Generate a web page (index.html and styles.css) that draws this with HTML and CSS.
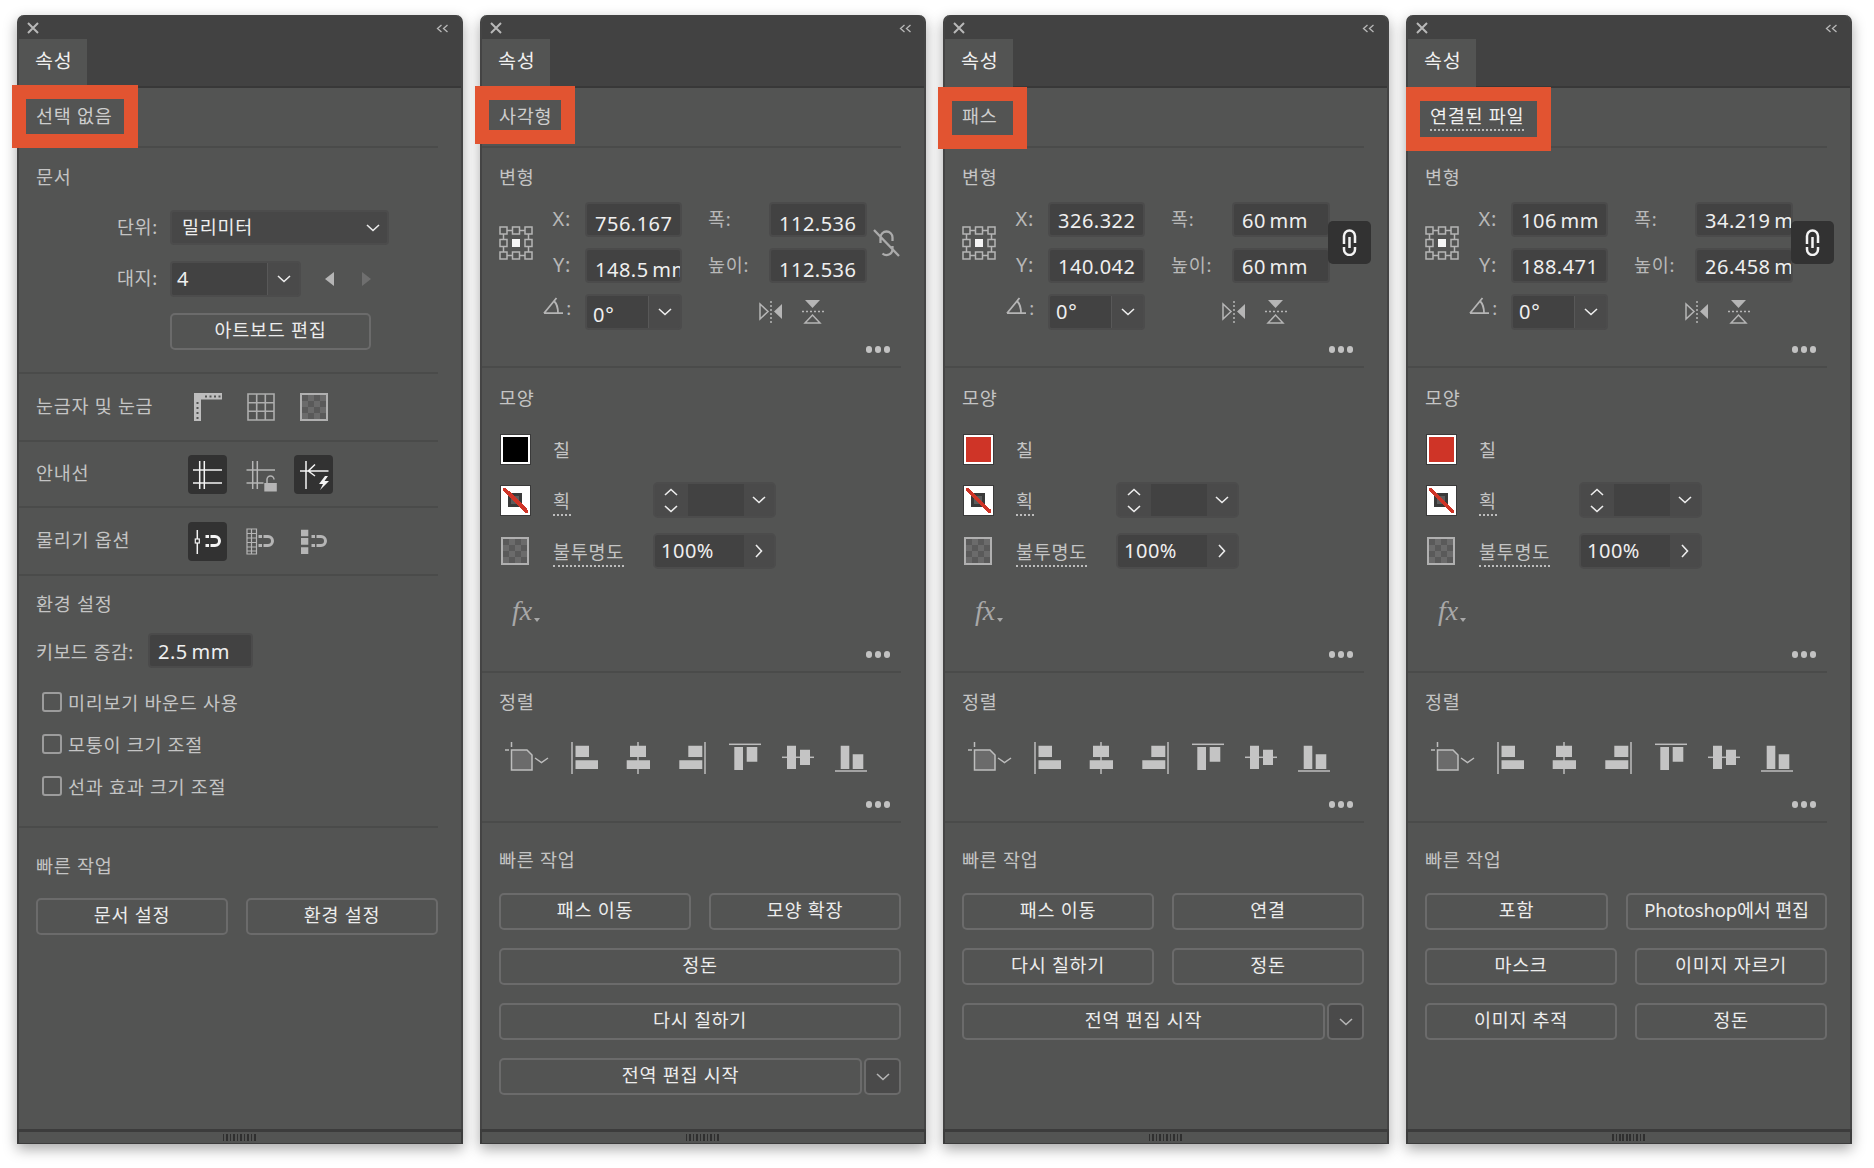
FILE: index.html
```html
<!DOCTYPE html>
<html lang="ko">
<head>
    <meta charset="UTF-8">
    <title>속성 패널</title>
    <link rel="stylesheet" href="styles.css">
</head>
<body>
    <!-- shared icons -->
    <svg class="defs" width="0" height="0">
        <symbol id="i-close" viewBox="0 0 12 12"><path d="M1 1l10 10M11 1L1 11" fill="none" stroke="currentColor" stroke-width="2"/></symbol>
        <symbol id="i-collapse" viewBox="0 0 13 9"><path d="M5.5 1L1.5 4.5l4 3.5M11.5 1l-4 3.5 4 3.5" fill="none" stroke="currentColor" stroke-width="1.3"/></symbol>
        <symbol id="i-chev" viewBox="0 0 14 8"><path d="M1 1l6 5.5L13 1" fill="none" stroke="currentColor" stroke-width="1.6"/></symbol>
        <symbol id="i-chev-up" viewBox="0 0 14 8"><path d="M1 7l6-5.5L13 7" fill="none" stroke="currentColor" stroke-width="1.6"/></symbol>
        <symbol id="i-chev-right" viewBox="0 0 8 14"><path d="M1 1l5.5 6L1 13" fill="none" stroke="currentColor" stroke-width="1.6"/></symbol>
        <symbol id="i-ruler" viewBox="0 0 28 28"><path d="M0 0h28v6.5H7V28H0z" fill="#bdbdbd"/><path d="M11 2.5h2v2h-2zM15.5 2.5h2v2h-2zM20 2.5h2v2h-2zM24.500 2.500h2v2h-2zM2.500 9h2v2h-2zM2.500 14h2v2h-2zM2.500 19h2v2h-2zM2.500 24h2v2h-2z" fill="#535453"/></symbol>
        <symbol id="i-grid" viewBox="0 0 28 28"><path d="M1 1h26v26H1zM9.700 1v26M18.300 1v26M1 9.700h26M1 18.300h26" fill="none" stroke="#adadad" stroke-width="1.600"/></symbol>
        <symbol id="i-checker" viewBox="0 0 28 28"><rect width="28" height="28" fill="#6b6b6b"/><path d="M2 2h6v6H2zM14 2h6v6h-6zM8 8h6v6H8zM20 8h6v6h-6zM2 14h6v6H2zM14 14h6v6h-6zM8 20h6v6H8zM20 20h6v6h-6z" fill="#5a5a5a"/><rect x="1" y="1" width="26" height="26" fill="none" stroke="#b0b0b0" stroke-width="2"/></symbol>
        <symbol id="i-guides" viewBox="0 0 39 39"><path d="M11.700 6v28M16.300 6v28M5 15h29M5 28h29" fill="none" stroke="currentColor" stroke-width="1.500"/></symbol>
        <symbol id="i-guides-lock" viewBox="0 0 39 39"><path d="M11.700 6v28M16.300 6v28M5.500 15h28.500M5.500 28h17" fill="none" stroke="currentColor" stroke-width="1.500"/><rect x="23.300" y="28" width="12.500" height="8.500" fill="currentColor"/><path d="M26 28v-3.500a3.500 3.500 0 0 1 7 0" fill="none" stroke="currentColor" stroke-width="1.500"/></symbol>
        <symbol id="i-guides-smart" viewBox="0 0 39 39"><path d="M12 6v28M6 16h28.500M21 9.500l-6.700 6.500 6.700 5" fill="none" stroke="currentColor" stroke-width="1.500"/><path d="M31 21l-6 8h4l-3 6 9-9h-4.500l3.500-5z" fill="currentColor"/></symbol>
        <symbol id="i-magnet" viewBox="0 0 39 39"><path d="M22.500 14.500H27a4.500 4.500 0 0 1 0 9h-4.500" fill="none" stroke="currentColor" stroke-width="3"/><path d="M17.500 13h3.500v3h-3.500zM17.500 22h3.500v3h-3.500z" fill="currentColor"/></symbol>
        <symbol id="i-snap-point" viewBox="0 0 39 39"><use href="#i-magnet"/><path d="M9.300 8v9M9.300 21v11" stroke="currentColor" stroke-width="1.500"/><rect x="7.300" y="17" width="4" height="4" fill="none" stroke="currentColor" stroke-width="1.200"/></symbol>
        <symbol id="i-snap-grid" viewBox="0 0 39 39"><use href="#i-magnet"/><path d="M6 7h9.500v25H6zM10.500 7v25M6 11.500h9.500M6 16h9.500M6 20.500h9.500M6 25h9.500M6 29h9.500" fill="none" stroke="currentColor" stroke-width="1.200"/></symbol>
        <symbol id="i-snap-pixel" viewBox="0 0 39 39"><use href="#i-magnet"/><path d="M7 7.700h7.300v6.600H7zM7 16h7.300v6.700H7zM7 25.300h7.300V32H7z" fill="currentColor"/></symbol>
        <symbol id="i-refpoint" viewBox="0 0 34 34"><g fill="none" stroke="#b5b5b5" stroke-width="1.500"><rect x="1" y="1" width="7" height="7"/><rect x="13.500" y="1" width="7" height="7"/><rect x="26" y="1" width="7" height="7"/><rect x="1" y="13.500" width="7" height="7"/><rect x="26" y="13.500" width="7" height="7"/><rect x="1" y="26" width="7" height="7"/><rect x="13.500" y="26" width="7" height="7"/><rect x="26" y="26" width="7" height="7"/><path d="M8 4.500h5.500M20.500 4.500H26M8 29.500h5.500M20.500 29.500H26M4.500 8v5.500M29.500 8v5.500M4.500 20.500V26M29.500 20.500V26"/></g><rect x="13" y="13" width="8" height="8" fill="#f4f4f4"/></symbol>
        <symbol id="i-link" viewBox="0 0 15 27"><path d="M2 15V7a5.500 5.500 0 0 1 11 0v7M7.500 8v11M13 18v2.500a5.500 5.500 0 0 1-11 0V18" fill="none" stroke="currentColor" stroke-width="2.500"/></symbol>
        <symbol id="i-unlink" viewBox="0 0 27 28"><path d="M7.500 14V8.500a6 6 0 0 1 12 0V12M19.500 17v3a6 6 0 0 1-10 4.500M1 1l25 26" fill="none" stroke="#ababab" stroke-width="2.300"/></symbol>
        <symbol id="i-angle" viewBox="0 0 21 19"><path d="M1 17.200h19M1 17.200L13.500 2M11 5c3 3 4 7 4 12" fill="none" stroke="#b5b5b5" stroke-width="1.800"/></symbol>
        <symbol id="i-flip-h" viewBox="0 0 24 22"><path d="M1 3v15l8-7.500z" fill="none" stroke="#b5b5b5" stroke-width="1.500"/><path d="M23 3v15l-8-7.500z" fill="#b5b5b5"/><path d="M12 0v22" stroke="#b5b5b5" stroke-width="1.500" stroke-dasharray="2 2"/></symbol>
        <symbol id="i-flip-v" viewBox="0 0 22 24"><path d="M3 0h15l-7.500 8z" fill="#b5b5b5"/><path d="M3 23h15l-7.500-8z" fill="none" stroke="#b5b5b5" stroke-width="1.500"/><path d="M0 11.500h22" stroke="#b5b5b5" stroke-width="1.500" stroke-dasharray="2 2"/></symbol>
        <symbol id="i-origin" viewBox="0 0 44 32"><path d="M0 8h4M6.500 0v5" stroke="#bdbdbd" stroke-width="1.500"/><path d="M6.500 8H22l5 5v15H6.500z" fill="#6b6b6b" stroke="#bdbdbd" stroke-width="1.500"/><path d="M30 16l6.500 4.500L43 16" fill="none" stroke="#bdbdbd" stroke-width="1.500"/></symbol>
        <symbol id="i-al-left" viewBox="0 0 32 32"><path d="M2 0v32" stroke="#bdbdbd" stroke-width="1.500"/><path d="M5.500 3.700H19V15H5.500zM5.500 18.300H28V27H5.500z" fill="#c4c4c4"/></symbol>
        <symbol id="i-al-center" viewBox="0 0 32 32"><path d="M15 0v32" stroke="#bdbdbd" stroke-width="1.500"/><path d="M7 3.700h16V15H7zM3.700 18.300H27V27H3.700z" fill="#c4c4c4"/></symbol>
        <symbol id="i-al-right" viewBox="0 0 32 32"><path d="M29 0v32" stroke="#bdbdbd" stroke-width="1.500"/><path d="M12.300 3.700h14V15h-14zM3.300 18.300h23V27h-23z" fill="#c4c4c4"/></symbol>
        <symbol id="i-al-top" viewBox="0 0 32 32"><path d="M0 2.300h32" stroke="#bdbdbd" stroke-width="1.500"/><path d="M5.300 5H14v23H5.300zM17.700 5h10.600v14.700H17.700z" fill="#c4c4c4"/></symbol>
        <symbol id="i-al-middle" viewBox="0 0 32 32"><path d="M0 15.300h32" stroke="#bdbdbd" stroke-width="1.500"/><path d="M5 3.700h9V27H5zM18 7.700h10V23H18z" fill="#c4c4c4"/></symbol>
        <symbol id="i-al-bottom" viewBox="0 0 32 32"><path d="M0 29h32" stroke="#bdbdbd" stroke-width="1.500"/><path d="M5.700 3.700h8.600V27H5.700zM17.700 12.300h10.600V27H17.700z" fill="#c4c4c4"/></symbol>
    </svg>

    <!-- nothing selected -->
    <div class="panel">
        <div class="titlebar"><svg class="close"><use href="#i-close"/></svg><svg class="collapse"><use href="#i-collapse"/></svg></div>
        <div class="tabbar"><div class="tab">속성</div></div>
        <div class="mark mark-none"></div>
        <div class="section sec-head"><span class="sel-label">선택 없음</span></div>

        <div class="section sec-doc">
            <h3>문서</h3>
            <div class="doc-grid">
                <span class="doc-label">단위:</span>
                <div class="select select-unit"><span class="val ko">밀리미터</span><svg class="chev"><use href="#i-chev"/></svg></div>
                <span class="doc-label">대지:</span>
                <div class="board-row">
                    <div class="combo combo-board"><span class="combo-val">4</span><span class="combo-btn"><svg class="chev"><use href="#i-chev"/></svg></span></div>
                    <span class="tri tri-left"></span>
                    <span class="tri tri-right"></span>
                </div>
                <span></span>
                <div class="btn btn-board">아트보드 편집</div>
            </div>
        </div>

        <div class="section sec-row sec-ruler">
            <span class="row-label">눈금자 및 눈금</span>
            <div class="tool-row">
                <span class="tool"><svg class="ico-28"><use href="#i-ruler"/></svg></span>
                <span class="tool"><svg class="ico-28"><use href="#i-grid"/></svg></span>
                <span class="tool"><svg class="ico-28"><use href="#i-checker"/></svg></span>
            </div>
        </div>
        <div class="section sec-row sec-guide">
            <span class="row-label">안내선</span>
            <div class="tool-row">
                <span class="tool on"><svg class="ico-39"><use href="#i-guides"/></svg></span>
                <span class="tool"><svg class="ico-39"><use href="#i-guides-lock"/></svg></span>
                <span class="tool on"><svg class="ico-39"><use href="#i-guides-smart"/></svg></span>
            </div>
        </div>
        <div class="section sec-row sec-snap">
            <span class="row-label">물리기 옵션</span>
            <div class="tool-row">
                <span class="tool on"><svg class="ico-39"><use href="#i-snap-point"/></svg></span>
                <span class="tool"><svg class="ico-39"><use href="#i-snap-grid"/></svg></span>
                <span class="tool"><svg class="ico-39"><use href="#i-snap-pixel"/></svg></span>
            </div>
        </div>

        <div class="section sec-prefs">
            <h3>환경 설정</h3>
            <div class="key-row"><span class="key-label">키보드 증감:</span><div class="field field-key">2.5 mm</div></div>
            <label class="check"><span class="box"></span>미리보기 바운드 사용</label>
            <label class="check"><span class="box"></span>모퉁이 크기 조절</label>
            <label class="check"><span class="box"></span>선과 효과 크기 조절</label>
        </div>

        <div class="section sec-quick sec-quick-doc">
            <h3>빠른 작업</h3>
            <div class="qa-row"><div class="btn">문서 설정</div><div class="btn">환경 설정</div></div>
        </div>
        <div class="footer"><span class="grip"></span></div>
    </div>

    <!-- rectangle -->
    <div class="panel">
        <div class="titlebar"><svg class="close"><use href="#i-close"/></svg><svg class="collapse"><use href="#i-collapse"/></svg></div>
        <div class="tabbar"><div class="tab">속성</div></div>
        <div class="mark mark-rect"></div>
        <div class="section sec-head"><span class="sel-label">사각형</span></div>

        <div class="section sec-xform">
            <h3>변형</h3>
            <div class="xform">
                <svg class="refpoint"><use href="#i-refpoint"/></svg>
                <span class="xf-label">X:</span>
                <div class="field low">756.167</div>
                <span class="xf-label xf-label-r">폭:</span>
                <div class="field low">112.536</div>
                <span class="link-cell"><svg class="ico-unlink"><use href="#i-unlink"/></svg></span>
                <span class="xf-label">Y:</span>
                <div class="field low">148.5 mm</div>
                <span class="xf-label xf-label-r">높이:</span>
                <div class="field low">112.536</div>
                <span class="xf-label xf-angle"><svg class="ico-angle"><use href="#i-angle"/></svg>:</span>
                <div class="combo"><span class="combo-val low">0°</span><span class="combo-btn"><svg class="chev"><use href="#i-chev"/></svg></span></div>
                <div class="flips"><svg class="ico-flip-h"><use href="#i-flip-h"/></svg><svg class="ico-flip-v"><use href="#i-flip-v"/></svg></div>
            </div>
            <div class="dots dots-xform"><i></i><i></i><i></i></div>
        </div>

        <div class="section sec-look">
            <h3>모양</h3>
            <div class="look-grid">
                <span class="swatch fill-black"></span><span class="look-label">칠</span><span></span>
                <span class="swatch stroke-none"></span><span class="look-label"><span class="dotted">획</span></span>
                <div class="stepper"><span class="step-btn"><svg class="chev"><use href="#i-chev-up"/></svg><svg class="chev"><use href="#i-chev"/></svg></span><span class="step-val"></span><span class="combo-btn"><svg class="chev"><use href="#i-chev"/></svg></span></div>
                <svg class="ico-28 opacity-ico"><use href="#i-checker"/></svg><span class="look-label"><span class="dotted">불투명도</span></span>
                <div class="stepper"><span class="step-val step-wide">100%</span><span class="combo-btn"><svg class="chev-r"><use href="#i-chev-right"/></svg></span></div>
            </div>
            <div class="fx">fx<i></i></div>
            <div class="dots dots-look"><i></i><i></i><i></i></div>
        </div>

        <div class="section sec-align">
            <h3>정렬</h3>
            <div class="align-row">
                <svg class="ico-origin"><use href="#i-origin"/></svg>
                <svg class="ico-32"><use href="#i-al-left"/></svg>
                <svg class="ico-32"><use href="#i-al-center"/></svg>
                <svg class="ico-32"><use href="#i-al-right"/></svg>
                <svg class="ico-32"><use href="#i-al-top"/></svg>
                <svg class="ico-32"><use href="#i-al-middle"/></svg>
                <svg class="ico-32"><use href="#i-al-bottom"/></svg>
            </div>
            <div class="dots dots-align"><i></i><i></i><i></i></div>
        </div>

        <div class="section sec-quick">
            <h3>빠른 작업</h3>
            <div class="qa-row"><div class="btn">패스 이동</div><div class="btn">모양 확장</div></div>
            <div class="qa-row"><div class="btn">정돈</div></div>
            <div class="qa-row"><div class="btn">다시 칠하기</div></div>
            <div class="qa-row qa-split"><div class="btn">전역 편집 시작</div><div class="btn-arrow"><svg class="chev"><use href="#i-chev"/></svg></div></div>
        </div>
        <div class="footer"><span class="grip"></span></div>
    </div>

    <!-- path -->
    <div class="panel">
        <div class="titlebar"><svg class="close"><use href="#i-close"/></svg><svg class="collapse"><use href="#i-collapse"/></svg></div>
        <div class="tabbar"><div class="tab">속성</div></div>
        <div class="mark mark-path"></div>
        <div class="section sec-head"><span class="sel-label">패스</span></div>

        <div class="section sec-xform">
            <h3>변형</h3>
            <div class="xform">
                <svg class="refpoint"><use href="#i-refpoint"/></svg>
                <span class="xf-label">X:</span>
                <div class="field">326.322</div>
                <span class="xf-label xf-label-r">폭:</span>
                <div class="field">60 mm</div>
                <span class="link-cell"><span class="link-tile"><svg class="ico-link"><use href="#i-link"/></svg></span></span>
                <span class="xf-label">Y:</span>
                <div class="field">140.042</div>
                <span class="xf-label xf-label-r">높이:</span>
                <div class="field">60 mm</div>
                <span class="xf-label xf-angle"><svg class="ico-angle"><use href="#i-angle"/></svg>:</span>
                <div class="combo"><span class="combo-val">0°</span><span class="combo-btn"><svg class="chev"><use href="#i-chev"/></svg></span></div>
                <div class="flips"><svg class="ico-flip-h"><use href="#i-flip-h"/></svg><svg class="ico-flip-v"><use href="#i-flip-v"/></svg></div>
            </div>
            <div class="dots dots-xform"><i></i><i></i><i></i></div>
        </div>

        <div class="section sec-look">
            <h3>모양</h3>
            <div class="look-grid">
                <span class="swatch fill-red"></span><span class="look-label">칠</span><span></span>
                <span class="swatch stroke-none"></span><span class="look-label"><span class="dotted">획</span></span>
                <div class="stepper"><span class="step-btn"><svg class="chev"><use href="#i-chev-up"/></svg><svg class="chev"><use href="#i-chev"/></svg></span><span class="step-val"></span><span class="combo-btn"><svg class="chev"><use href="#i-chev"/></svg></span></div>
                <svg class="ico-28 opacity-ico"><use href="#i-checker"/></svg><span class="look-label"><span class="dotted">불투명도</span></span>
                <div class="stepper"><span class="step-val step-wide">100%</span><span class="combo-btn"><svg class="chev-r"><use href="#i-chev-right"/></svg></span></div>
            </div>
            <div class="fx">fx<i></i></div>
            <div class="dots dots-look"><i></i><i></i><i></i></div>
        </div>

        <div class="section sec-align">
            <h3>정렬</h3>
            <div class="align-row">
                <svg class="ico-origin"><use href="#i-origin"/></svg>
                <svg class="ico-32"><use href="#i-al-left"/></svg>
                <svg class="ico-32"><use href="#i-al-center"/></svg>
                <svg class="ico-32"><use href="#i-al-right"/></svg>
                <svg class="ico-32"><use href="#i-al-top"/></svg>
                <svg class="ico-32"><use href="#i-al-middle"/></svg>
                <svg class="ico-32"><use href="#i-al-bottom"/></svg>
            </div>
            <div class="dots dots-align"><i></i><i></i><i></i></div>
        </div>

        <div class="section sec-quick">
            <h3>빠른 작업</h3>
            <div class="qa-row"><div class="btn">패스 이동</div><div class="btn">연결</div></div>
            <div class="qa-row"><div class="btn">다시 칠하기</div><div class="btn">정돈</div></div>
            <div class="qa-row qa-split"><div class="btn">전역 편집 시작</div><div class="btn-arrow"><svg class="chev"><use href="#i-chev"/></svg></div></div>
        </div>
        <div class="footer"><span class="grip"></span></div>
    </div>

    <!-- linked file -->
    <div class="panel">
        <div class="titlebar"><svg class="close"><use href="#i-close"/></svg><svg class="collapse"><use href="#i-collapse"/></svg></div>
        <div class="tabbar"><div class="tab">속성</div></div>
        <div class="mark mark-linked"></div>
        <div class="section sec-head"><span class="sel-label sel-link">연결된 파일</span></div>

        <div class="section sec-xform">
            <h3>변형</h3>
            <div class="xform">
                <svg class="refpoint"><use href="#i-refpoint"/></svg>
                <span class="xf-label">X:</span>
                <div class="field">106 mm</div>
                <span class="xf-label xf-label-r">폭:</span>
                <div class="field">34.219 mm</div>
                <span class="link-cell"><span class="link-tile"><svg class="ico-link"><use href="#i-link"/></svg></span></span>
                <span class="xf-label">Y:</span>
                <div class="field">188.471</div>
                <span class="xf-label xf-label-r">높이:</span>
                <div class="field">26.458 mm</div>
                <span class="xf-label xf-angle"><svg class="ico-angle"><use href="#i-angle"/></svg>:</span>
                <div class="combo"><span class="combo-val">0°</span><span class="combo-btn"><svg class="chev"><use href="#i-chev"/></svg></span></div>
                <div class="flips"><svg class="ico-flip-h"><use href="#i-flip-h"/></svg><svg class="ico-flip-v"><use href="#i-flip-v"/></svg></div>
            </div>
            <div class="dots dots-xform"><i></i><i></i><i></i></div>
        </div>

        <div class="section sec-look">
            <h3>모양</h3>
            <div class="look-grid">
                <span class="swatch fill-red"></span><span class="look-label">칠</span><span></span>
                <span class="swatch stroke-none"></span><span class="look-label"><span class="dotted">획</span></span>
                <div class="stepper"><span class="step-btn"><svg class="chev"><use href="#i-chev-up"/></svg><svg class="chev"><use href="#i-chev"/></svg></span><span class="step-val"></span><span class="combo-btn"><svg class="chev"><use href="#i-chev"/></svg></span></div>
                <svg class="ico-28 opacity-ico"><use href="#i-checker"/></svg><span class="look-label"><span class="dotted">불투명도</span></span>
                <div class="stepper"><span class="step-val step-wide">100%</span><span class="combo-btn"><svg class="chev-r"><use href="#i-chev-right"/></svg></span></div>
            </div>
            <div class="fx">fx<i></i></div>
            <div class="dots dots-look"><i></i><i></i><i></i></div>
        </div>

        <div class="section sec-align">
            <h3>정렬</h3>
            <div class="align-row">
                <svg class="ico-origin"><use href="#i-origin"/></svg>
                <svg class="ico-32"><use href="#i-al-left"/></svg>
                <svg class="ico-32"><use href="#i-al-center"/></svg>
                <svg class="ico-32"><use href="#i-al-right"/></svg>
                <svg class="ico-32"><use href="#i-al-top"/></svg>
                <svg class="ico-32"><use href="#i-al-middle"/></svg>
                <svg class="ico-32"><use href="#i-al-bottom"/></svg>
            </div>
            <div class="dots dots-align"><i></i><i></i><i></i></div>
        </div>

        <div class="section sec-quick">
            <h3>빠른 작업</h3>
            <div class="qa-row"><div class="btn">포함</div><div class="btn btn-wide">Photoshop에서 편집</div></div>
            <div class="qa-row"><div class="btn">마스크</div><div class="btn">이미지 자르기</div></div>
            <div class="qa-row"><div class="btn">이미지 추적</div><div class="btn">정돈</div></div>
        </div>
        <div class="footer"><span class="grip"></span></div>
    </div>
</body>
</html>
```

FILE: styles.css
```css
* {
    box-sizing: border-box;
}

body {
    margin: 0;
    padding: 15px 0 0 17px;
    height: 1168px;
    overflow: hidden;
    display: flex;
    gap: 17px;
    background-color: #fff;
    color: #c4c4c4;
    font-family: "Noto Sans", "Noto Sans CJK KR", sans-serif;
    font-size: 18.5px;
    letter-spacing: 0.7px;
}

.defs {
    position: absolute;
}

svg {
    display: block;
    flex: none;
}

/* Panel frame */
.panel {
    position: relative;
    width: 446px;
    height: 1129px;
    display: flex;
    flex-direction: column;
    background-color: #535453;
    border-left: 2px solid #444;
    border-right: 2px solid #444;
    border-radius: 7px 7px 0 0;
    box-shadow: 0 5px 14px rgba(0, 0, 0, 0.35);
}

.titlebar {
    height: 24px;
    flex: none;
    display: flex;
    justify-content: space-between;
    align-items: center;
    padding: 2px 12px 0 8px;
    background-color: #424242;
    border-radius: 7px 7px 0 0;
    color: #b8b8b8;
}

.close {
    width: 12px;
    height: 12px;
}

.collapse {
    width: 13px;
    height: 9px;
}

.tabbar {
    height: 49px;
    flex: none;
    background-color: #424242;
    border-bottom: 2px solid #383838;
}

.tab {
    width: 68px;
    height: 48px;
    padding: 7px 0 0 16px;
    line-height: 30px;
    background-color: #535453;
    color: #f0f0f0;
    font-size: 19.5px;
}

/* Orange highlight drawn over the screenshot */
.mark {
    position: absolute;
    border: 14px solid #e25431;
}

.mark-none {
    left: -7px;
    top: 70px;
    width: 126px;
    height: 63px;
}

.mark-rect {
    left: -7px;
    top: 71px;
    width: 100px;
    height: 58px;
}

.mark-path {
    left: -7px;
    top: 72px;
    width: 89px;
    height: 62px;
}

.mark-linked {
    left: -2px;
    top: 72px;
    width: 145px;
    height: 64px;
}

/* Sections */
.section {
    flex: none;
    margin-right: 23px;
    padding-left: 17px;
    border-bottom: 2px solid #4a4b4a;
}

h3 {
    margin: 0;
    font-size: inherit;
    font-weight: normal;
    line-height: 24px;
}

.sec-head {
    height: 60px;
    padding-top: 16px;
    line-height: 24px;
}

.sel-label {
    color: #cdcdcd;
}

.sel-link {
    margin-left: 5px;
    color: #efefef;
    border-bottom: 2px dotted #bbb;
    padding-bottom: 1px;
}

/* Document section */
.sec-doc {
    height: 226px;
    padding-top: 17px;
}

.doc-grid {
    margin-top: 21px;
    display: grid;
    grid-template-columns: 134px 219px;
    grid-template-rows: 35px 34px 36px;
    row-gap: 17px;
    align-items: center;
}

.doc-label {
    padding: 0 12px 4px 0;
    text-align: right;
}

.select {
    height: 35px;
    display: flex;
    align-items: center;
    justify-content: space-between;
    padding: 0 7px 4px 10px;
    background-color: #474747;
    border: 2px solid #4c4c4c;
    border-radius: 4px;
    color: #efefef;
}

.select .chev {
    margin-top: 4px;
}

.chev {
    width: 14px;
    height: 8px;
    color: #ececec;
}

.chev-r {
    width: 8px;
    height: 14px;
    color: #ececec;
}

.board-row {
    display: flex;
    align-items: center;
}

.combo-board {
    width: 131px;
    height: 34px;
}

.combo-board .combo-val {
    padding-left: 5px;
}

.tri {
    width: 0;
    height: 0;
    border-top: 7px solid transparent;
    border-bottom: 7px solid transparent;
}

.tri-left {
    margin-left: 24px;
    border-right: 9px solid #b5b5b5;
}

.tri-right {
    margin-left: 28px;
    border-left: 9px solid #6f6f6f;
}

.btn-board {
    flex: none;
    width: 201px;
    height: 36px;
    line-height: 28px;
}

/* Icon rows in the no-selection panel */
.sec-row {
    display: flex;
    align-items: center;
}

.sec-ruler {
    height: 68px;
}

.sec-guide {
    height: 66px;
}

.sec-snap {
    height: 68px;
}

.row-label {
    padding-bottom: 4px;
    color: #c4c4c4;
}

.tool-row {
    position: absolute;
    left: 169px;
    display: flex;
    gap: 14px;
}

.tool {
    width: 39px;
    height: 39px;
    display: flex;
    align-items: center;
    justify-content: center;
    color: #b5b5b5;
    border-radius: 4px;
}

.tool.on {
    background-color: #323232;
    color: #f4f4f4;
}

.ico-28 {
    width: 28px;
    height: 28px;
}

.ico-39 {
    width: 39px;
    height: 39px;
}

/* Preferences */
.sec-prefs {
    height: 252px;
    padding-top: 16px;
}

.key-row {
    margin: 17px 0 23px;
    display: flex;
    align-items: center;
}

.key-label {
    width: 112px;
    flex: none;
    white-space: nowrap;
    letter-spacing: 0.4px;
}

.field-key {
    width: 105px;
    flex: none;
}

.check {
    display: flex;
    align-items: center;
    height: 21px;
    margin: 0 0 21px 6px;
    gap: 6px;
}

.box {
    width: 20px;
    height: 20px;
    flex: none;
    border: 2px solid #9c9c9c;
    border-radius: 3px;
}

/* Text fields */
.field {
    height: 35px;
    padding-left: 8px;
    line-height: 33px;
    overflow: hidden;
    white-space: nowrap;
    background-color: #424242;
    border: 2px solid #4b4b4b;
    border-radius: 4px;
    color: #efefef;
    font-size: 20px;
    letter-spacing: 0.5px;
    word-spacing: -2px;
}

.low {
    padding-top: 3px;
}

.combo {
    height: 36px;
    display: flex;
    background-color: #4a4a4a;
    border: 2px solid #4c4c4c;
    border-radius: 4px;
    overflow: hidden;
}

.combo-val {
    flex: 1;
    padding-left: 6px;
    line-height: 32px;
    background-color: #424242;
    border-right: 1px solid #585858;
    color: #efefef;
    font-size: 20px;
}

.combo-btn {
    width: 31px;
    flex: none;
    display: flex;
    align-items: center;
    justify-content: center;
}

/* Transform section */
.sec-xform {
    height: 220px;
    padding-top: 17px;
}

.xform {
    margin-top: 13px;
    display: grid;
    grid-template-columns: 34px 52px 97px 87px 98px 33px;
    grid-template-rows: 35px 35px 36px;
    row-gap: 11px;
    align-items: center;
}

.refpoint {
    grid-row: 1 / 3;
    width: 34px;
    height: 34px;
    align-self: center;
    margin-top: 1px;
}

.xf-label {
    grid-column: 2;
    padding: 0 14px 3px 0;
    text-align: right;
    color: #b8b8b8;
    font-size: 20px;
}

.xf-label-r {
    grid-column: 4;
    padding: 0 0 3px 26px;
    text-align: left;
    font-size: 18.5px;
}

.xf-angle {
    display: flex;
    justify-content: flex-end;
    align-items: flex-start;
    gap: 2px;
    margin-left: -4px;
    padding: 0 13px 8px 0;
    font-size: 18.5px;
    line-height: 24px;
}

.ico-angle {
    width: 21px;
    height: 19px;
}

.link-cell {
    grid-column: 6;
    grid-row: 1 / 3;
    display: flex;
    align-items: center;
    position: relative;
}

.ico-unlink {
    width: 27px;
    height: 28px;
    margin-left: 6px;
}

.link-tile {
    width: 43px;
    height: 43px;
    flex: none;
    margin-left: -2px;
    display: flex;
    align-items: center;
    justify-content: center;
    background-color: #323232;
    border-radius: 5px;
    color: #f4f4f4;
}

.ico-link {
    width: 15px;
    height: 27px;
}

.flips {
    grid-column: 4 / 6;
    display: flex;
    align-items: center;
    gap: 19px;
    padding-left: 77px;
}

.ico-flip-h {
    width: 24px;
    height: 22px;
}

.ico-flip-v {
    width: 22px;
    height: 24px;
}

.dots {
    display: flex;
    justify-content: flex-end;
    gap: 2.5px;
    padding-right: 11px;
}

.dots i {
    width: 6.5px;
    height: 6.5px;
    border-radius: 50%;
    background-color: #c2c2c2;
}

.dots-xform {
    margin-top: 16px;
}

/* Appearance section */
.sec-look {
    height: 305px;
    padding-top: 18px;
}

.look-grid {
    margin-top: 21px;
    display: grid;
    grid-template-columns: 54px 100px 123px;
    grid-template-rows: 36px 36px 36px;
    row-gap: 15px;
    align-items: center;
}

.swatch {
    display: block;
    width: 29px;
    height: 29px;
    margin-left: 1.5px;
    border: 2px solid #fff;
    outline: 1.5px solid #3a3a3a;
}

.fill-black {
    background-color: #000;
}

.fill-red {
    background-color: #cf3427;
}

.stroke-none {
    background:
        linear-gradient(to top right, transparent 45%, #cf3427 45%, #cf3427 56%, transparent 56%),
        linear-gradient(#5c5c5c, #5c5c5c) center / 8px 8px no-repeat,
        linear-gradient(#3a3a3a, #3a3a3a) center / 14px 14px no-repeat,
        #fff;
}

.opacity-ico {
    margin-left: 2px;
}

.look-label {
    color: #c4c4c4;
}

.dotted {
    border-bottom: 2px dotted #bdbdbd;
    padding-bottom: 1px;
}

.stepper {
    height: 36px;
    display: flex;
    background-color: #4a4a4a;
    border: 2px solid #4c4c4c;
    border-radius: 5px;
    overflow: hidden;
}

.stepper .combo-btn {
    padding-right: 3px;
}

.step-btn {
    width: 31px;
    flex: none;
    display: flex;
    flex-direction: column;
    align-items: center;
    justify-content: center;
    gap: 9px;
}

.step-val {
    width: 56px;
    flex: none;
    margin-left: 2px;
    margin-right: 1px;
    background-color: #424242;
    color: #efefef;
    font-size: 20px;
    line-height: 32px;
}

.step-wide {
    width: 89px;
    margin-left: 0;
    padding-left: 6px;
    letter-spacing: 0.5px;
}

.fx {
    position: relative;
    width: 34px;
    height: 34px;
    margin: 25px 0 0 13px;
    color: #a8a8a8;
    font-family: "Liberation Serif", serif;
    font-style: italic;
    font-size: 28px;
    line-height: 34px;
    letter-spacing: 0;
}

.fx i {
    position: absolute;
    left: 22px;
    top: 24px;
    border-top: 4px solid #a8a8a8;
    border-left: 3px solid transparent;
    border-right: 3px solid transparent;
}

.dots-look {
    margin-top: 23px;
}

/* Align section */
.sec-align {
    height: 150px;
    padding-top: 17px;
}

.align-row {
    margin: 28px 0 0 6px;
    display: flex;
    gap: 21px;
}

.ico-origin {
    width: 44px;
    height: 32px;
}

.ico-32 {
    width: 32px;
    height: 32px;
}

.dots-align {
    margin-top: 27px;
}

/* Quick actions */
.sec-quick {
    flex: 1;
    padding-top: 25px;
    border-bottom: 0;
}

.sec-quick h3 {
    margin-bottom: 21px;
}

.sec-quick-doc {
    padding-top: 26px;
}

.sec-quick-doc h3 {
    margin-bottom: 20px;
}

.qa-row {
    display: flex;
    gap: 18px;
    margin-bottom: 18px;
}

.qa-split {
    gap: 2px;
}

.btn {
    flex: 1 1 0;
    height: 37px;
    line-height: 30px;
    text-align: center;
    white-space: nowrap;
    border: 2px solid #6b6b6b;
    border-radius: 5px;
    color: #ececec;
}

.btn-wide {
    flex: 0 0 201px;
    letter-spacing: -0.2px;
}

.btn-arrow {
    width: 37px;
    height: 37px;
    flex: none;
    display: flex;
    align-items: center;
    justify-content: center;
    background-color: #4a4a4a;
    border: 2px solid #6b6b6b;
    border-radius: 5px;
}

.btn-arrow .chev {
    color: #b5b5b5;
}

/* Bottom resize strip */
.footer {
    position: absolute;
    left: -2px;
    right: -2px;
    top: 100%;
    height: 15px;
    margin-top: -15px;
    display: flex;
    justify-content: center;
    background-color: #535453;
    border: solid #3c3c3c;
    border-width: 3px 2px 1px;
}

.grip {
    width: 34px;
    height: 7px;
    margin-top: 2px;
    background: repeating-linear-gradient(to right, #2f2f2f 0, #2f2f2f 1.5px, transparent 1.5px, transparent 3.5px);
}
```
